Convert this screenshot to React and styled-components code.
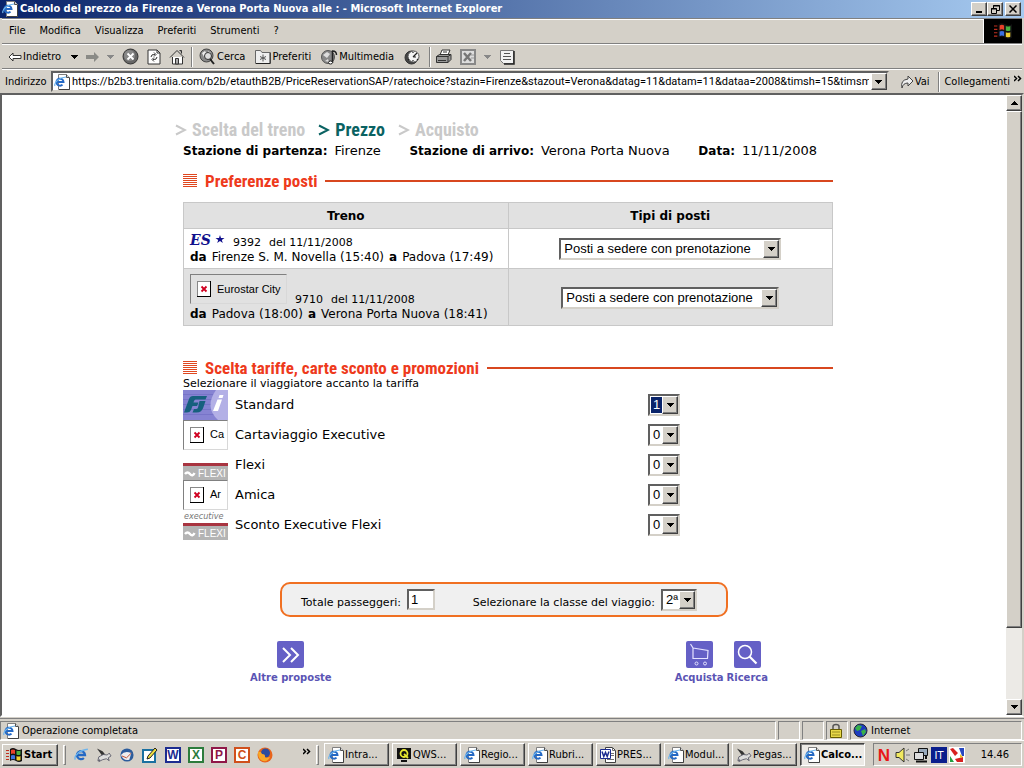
import React, { useState } from 'react'
import styled, { createGlobalStyle, css } from 'styled-components'

const GlobalStyle = createGlobalStyle`
    * {
        box-sizing: border-box;
    }
    body {
        margin: 0;
        background: #d4d0c8;
        color: #000;
        font-family: 'DejaVu Sans Condensed', 'DejaVu Sans', sans-serif;
        font-size: 11px;
        line-height: 14px;
    }
    button, input, select {
        font: inherit;
        color: inherit;
        margin: 0;
        border-radius: 0;
    }
    svg {
        display: block;
        flex: none;
    }
`
const raised = css`
    border: 1px solid;
    border-color: #fff #404040 #404040 #fff;
    box-shadow: inset -1px -1px 0 #808080;
    background: #d4d0c8;
`
const sunken = css`
    border: 2px solid;
    border-color: #606060 #d4d0c8 #d4d0c8 #606060;
    background: #fff;
`
const Window = styled.div`
    display: flex;
    flex-direction: column;
    height: 100vh;
    overflow: hidden;
`

/* Barra del titolo */
const TitleBar = styled.header`
    display: flex;
    align-items: center;
    flex: none;
    height: 18px;
    padding: 0 3px 0 2px;
    gap: 2px;
    background: linear-gradient(to right, #0a246a, #a6caf0);
`
const TitleText = styled.h1`
    flex: 1;
    margin: 0;
    color: #fff;
    font-size: 11px;
    font-weight: bold;
    white-space: nowrap;
`
const CaptionButtons = styled.div`
    display: flex;
`
const CaptionButton = styled.button`
    ${raised}
    display: flex;
    align-items: center;
    justify-content: center;
    width: 16px;
    height: 14px;
    padding: 0;
    margin-left: ${(p) => (p.$detached ? '2px' : '0')};
`

/* Menu e barre degli strumenti */
const MenuBar = styled.nav`
    display: flex;
    align-items: stretch;
    flex: none;
    height: 26px;
    margin: 0 2px;
    border-top: 1px solid #808080;
    border-bottom: 1px solid #808080;
    box-shadow: inset 0 1px 0 #fff;
`
const MenuItem = styled.button`
    border: none;
    background: none;
    padding: 0 7px;
`
const Throbber = styled.div`
    display: flex;
    align-items: center;
    justify-content: center;
    width: 39px;
    margin-left: auto;
    border-left: 1px solid #fff;
    background: #000;
`
const Toolbar = styled.div`
    display: flex;
    align-items: center;
    flex: none;
    height: 25px;
    margin: 0 2px;
    padding-left: 6px;
    border-top: 1px solid #fff;
    border-bottom: 1px solid #808080;
`
const ToolButton = styled.button`
    display: flex;
    align-items: center;
    gap: 1px;
    border: none;
    background: none;
    padding: 0;
    margin-right: ${(p) => p.$after || 8}px;
`
const Separator = styled.span`
    width: 2px;
    height: 20px;
    margin-right: ${(p) => p.$after || 6}px;
    border-left: 1px solid #808080;
    border-right: 1px solid #fff;
`
const AddressBar = styled.form`
    display: flex;
    align-items: center;
    flex: none;
    height: 24px;
    margin: 0 2px;
    padding-left: 3px;
    border-top: 1px solid #fff;
`
const AddressLabel = styled.label`
    width: 46px;
`
const AddressField = styled.div`
    ${sunken}
    display: flex;
    align-items: center;
    flex: 1;
    height: 21px;
    padding-left: 1px;
    gap: 2px;
`
const AddressInput = styled.input`
    flex: 1;
    min-width: 0;
    height: 16px;
    padding: 0;
    border: none;
    outline: none;
    background: none;
    font-family: Roboto, sans-serif;
`
const ArrowBox = styled.span`
    ${raised}
    display: flex;
    align-items: center;
    justify-content: center;
    width: 16px;
    height: 100%;
    pointer-events: none;
`
const GoButton = styled(ToolButton)`
    margin: 0 9px 0 11px;
`
const LinksLabel = styled.span`
    display: flex;
    gap: 4px;
`

/* Area del documento */
const Viewport = styled.div`
    display: flex;
    flex: 1;
    min-height: 0;
    border: 2px solid;
    border-color: #606060 #d4d0c8 #fff #606060;
    background: #fff;
`
const Documento = styled.main`
    flex: 1;
    overflow: hidden;
    font-family: 'DejaVu Sans', sans-serif;
`
const ScrollBar = styled.div`
    display: flex;
    flex-direction: column;
    width: 16px;
    background: #eceae6;
`
const ScrollButton = styled.button`
    ${raised}
    display: flex;
    align-items: center;
    justify-content: center;
    flex: none;
    height: 16px;
    padding: 0;
`
const ScrollTrack = styled.div`
    flex: 1;
    min-height: 0;
`
const ScrollThumb = styled.div`
    ${raised}
    height: 88%;
`
const Column = styled.div`
    max-width: 658px;
    margin: 0 auto;
    padding-top: 22px;
`
const Inset = styled.div`
    padding-left: 8px;
`
const Steps = styled.nav`
    display: flex;
    gap: 13px;
    font-family: 'Liberation Sans Narrow', 'Roboto Condensed', sans-serif;
    font-size: 18px;
    font-weight: bold;
    line-height: 26px;
`
const Step = styled.a`
    display: flex;
    align-items: center;
    gap: 5px;
    color: ${(p) => (p.$current ? '#0a6262' : '#c9c9c9')};
    text-decoration: none;
`
const TripInfo = styled.dl`
    display: flex;
    justify-content: space-between;
    margin: 0;
    padding: 0 16px 0 8px;
    line-height: 16px;
`
const TripItem = styled.div`
    display: flex;
    gap: 7px;

    dt {
        font-size: 12px;
        font-weight: bold;
    }
    dd {
        margin: 0;
        font-size: 13px;
    }
`
const SectionTitle = styled.div`
    display: flex;
    align-items: center;
    gap: 8px;
    height: 20px;
    margin-top: ${(p) => p.$top}px;

    h2 {
        margin: 0;
        color: #ee3a1c;
        font-family: 'Liberation Sans Narrow', 'Roboto Condensed', sans-serif;
        font-size: 17px;
        line-height: 20px;
    }
    &::after {
        content: '';
        flex: 1;
        height: 2px;
        background: #d8471f;
    }
`
const SeatTable = styled.table`
    width: 100%;
    margin-top: 11px;
    border-collapse: collapse;
    table-layout: fixed;
    font-size: 12px;

    th, td {
        border: 1px solid #c8c8c8;
        padding: 5px 6px 4px;
    }
    th {
        height: 26px;
        background: #e1e1e1;
    }
    td:last-child {
        text-align: center;
    }
`
const SeatRow = styled.tr`
    background: ${(p) => (p.$shaded ? '#e1e1e1' : '#fff')};
`
const TrainLine = styled.div`
    display: flex;
    align-items: flex-end;
    gap: 8px;
    font-size: 11px;
`
const TrainLogo = styled.div`
    padding-bottom: ${(p) => (p.$framed ? '3px' : '4px')};
`
const RouteLine = styled.div`
    display: flex;
    gap: 5px;
    white-space: nowrap;
`
const SelectFrame = styled.span`
    ${sunken}
    display: inline-grid;
    grid-template-columns: 1fr 16px;
    width: ${(p) => p.$width}px;
    height: 22px;
    vertical-align: middle;

    select {
        grid-area: 1 / 1 / 2 / 3;
        min-width: 0;
        height: 18px;
        padding: 0 0 0 3px;
        border: none;
        outline: none;
        appearance: none;
        background: none;
        font-family: 'Liberation Sans', sans-serif;
        font-size: 13px;
        line-height: 18px;
        text-align: left;
    }
    ${ArrowBox} {
        grid-area: 1 / 2 / 2 / 3;
    }
`
const SelectHighlight = styled(SelectFrame)`
    select {
        color: #fff;
        background: #0a246a;
        border: 1px solid #fff;
        padding-left: 2px;
        line-height: 16px;
    }
`
const MissingImage = styled.span`
    display: flex;
    align-items: ${(p) => (p.$framed ? 'center' : 'flex-start')};
    gap: 6px;
    width: ${(p) => (p.$framed ? 97 : 45)}px;
    height: 30px;
    padding: ${(p) => (p.$framed ? '0 6px' : '6px 6px 0')};
    overflow: hidden;
    border: 1px solid;
    border-color: #808080 #d8d8d8 #d8d8d8 #808080;
    font-family: 'Liberation Sans', sans-serif;
    font-size: 11px;
    white-space: nowrap;
`
const Hint = styled.p`
    margin: 0;
    font-size: 11px;
    line-height: 12px;
`
const RateRow = styled.div`
    display: grid;
    grid-template-columns: 45px 406px auto;
    align-items: center;
    column-gap: 7px;
    height: 30px;
    justify-items: start;
    font-size: 13px;
`
const SummaryBox = styled.div`
    display: flex;
    align-items: center;
    justify-content: space-between;
    max-width: 448px;
    height: 35px;
    margin: 42px auto 0;
    padding: 0 29px 0 19px;
    border: 2px solid #f07022;
    border-radius: 10px;
    background: #f0f0f0;
    font-size: 11px;
`
const SummaryField = styled.label`
    display: flex;
    align-items: center;
    gap: 6px;
    white-space: nowrap;
`
const SummaryText = styled.span`
    padding-top: 6px;
`
const PassengerInput = styled.input`
    ${sunken}
    width: 28px;
    height: 21px;
    padding: 0 2px;
    font-family: 'Liberation Sans', sans-serif;
    font-size: 13px;
`
const Actions = styled.div`
    display: flex;
    justify-content: space-between;
    padding: 24px 65px 0 75px;
`
const ActionGroup = styled.div`
    display: flex;
    gap: 3px;
`
const ActionButton = styled.button`
    display: flex;
    flex-direction: column;
    align-items: center;
    gap: 3px;
    padding: 0;
    border: none;
    background: none;
    color: #5a54b4;
    font-size: 10px;
    font-weight: bold;
    cursor: pointer;
`

/* Barra di stato */
const StatusBar = styled.footer`
    display: flex;
    flex: none;
    gap: 2px;
    height: 22px;
    margin-top: 1px;
    padding: 2px 2px 0 0;
    border-top: 1px solid #808080;
`
const StatusPane = styled.div`
    display: flex;
    align-items: center;
    flex: ${(p) => (p.$width ? `0 0 ${p.$width}px` : 1)};
    gap: 3px;
    padding-left: 2px;
    border: 1px solid;
    border-color: #808080 #fff #fff #808080;
`

/* Barra delle applicazioni */
const Taskbar = styled.div`
    display: flex;
    align-items: center;
    flex: none;
    height: 28px;
    padding: 0 2px;
    border-top: 1px solid #fff;
`
const StartButton = styled.button`
    ${raised}
    display: flex;
    align-items: center;
    gap: 2px;
    width: 56px;
    height: 22px;
    padding: 0 3px;
    font-weight: bold;
`
const Grip = styled.span`
    width: 3px;
    height: 20px;
    margin: 0 5px;
    border: 1px solid;
    border-color: #fff #808080 #808080 #fff;
`
const QuickLaunch = styled.div`
    display: flex;
    align-items: center;
    gap: 7px;
    width: 240px;
    padding-left: 2px;
`
const QuickMore = styled.span`
    margin: 0 0 6px auto;
`
const TaskList = styled.div`
    display: flex;
    flex: 1;
    gap: 3px;
    min-width: 0;
`
const TaskButton = styled.button`
    ${raised}
    display: flex;
    align-items: center;
    flex: 1;
    gap: 1px;
    min-width: 0;
    height: 23px;
    padding: 0 3px;
    white-space: nowrap;
    ${(p) => p.$active && css`
        border-color: #404040 #fff #fff #404040;
        box-shadow: inset 1px 1px 0 #808080;
        background: #eceae6;
        font-weight: bold;
    `}
`
const Tray = styled.div`
    display: flex;
    align-items: center;
    gap: 2px;
    width: 149px;
    height: 23px;
    margin-left: 8px;
    padding: 0 12px 0 3px;
    border: 1px solid;
    border-color: #808080 #fff #fff #808080;
`
const Clock = styled.time`
    margin-left: auto;
`

const Caret = ({ color = '#000' }) => (
    <svg width="7" height="4" viewBox="0 0 7 4" shapeRendering="crispEdges"><path d="M0 0h7L3.500 4z" fill={color} /></svg>
)
const CaretUp = () => (
    <svg width="7" height="4" viewBox="0 0 7 4" shapeRendering="crispEdges"><path d="M0 4h7L3.500 0z" /></svg>
)
const Chevrons = () => (
    <svg width="8" height="7" viewBox="0 0 8 7" fill="none" stroke="#000" strokeWidth="1.500"><path d="M0 1l2.500 2.500L0 6M4 1l2.500 2.500L4 6" /></svg>
)
const IeLetter = () => (
    <g fill="none">
        <path d="M2.500 8h7a3.500 3.500 0 1 0-1 2.600" stroke="#2468c4" strokeWidth="2" />
        <path d="M1 12C-.500 9 5 3.500 12 3" stroke="#6cb4ee" strokeWidth="1.200" />
    </g>
)
const IePage = () => (
    <svg width="16" height="16" viewBox="0 0 16 16">
        <path d="M4.500.500h8l3 3v12h-11z" fill="#fff" stroke="#808080" />
        <path d="M12.500.500v3h3" fill="#d8d8d8" stroke="#505050" />
        <path d="M15.500 4v11.500H5" fill="none" stroke="#404040" />
        <IeLetter />
    </svg>
)
const IeIcon = () => (
    <svg width="16" height="16" viewBox="-1 1 14 14"><IeLetter /></svg>
)
const WindowsFlag = ({ size = 16 }) => (
    <svg width={size} height={size} viewBox="0 0 16 16">
        <path d="M0 3h3v1H0zM0 6h3v1H0zM0 9h3v1H0zM0 12h3v1H0z" fill="#c03020" />
        <path d="M4 2q3-2 6 0t6 0v12q-3 2-6 0t-6 0z" fill="#111" />
        <path d="M5 3q2-1 4 0v4q-2-1-4 0z" fill="#e8402a" />
        <path d="M10.500 3.500q2 1 4 0v4q-2 1-4 0z" fill="#48b040" />
        <path d="M5 8.500q2-1 4 0v4q-2-1-4 0z" fill="#3a70e0" />
        <path d="M10.500 9q2 1 4 0v4q-2 1-4 0z" fill="#f0d030" />
    </svg>
)
const BackIcon = () => (
    <svg width="14" height="10" viewBox="0 0 14 10"><path d="M1 5l4-4v2.500h8v3H5V9z" fill="#fff" stroke="#333" /></svg>
)
const ForwardIcon = () => (
    <svg width="13" height="10" viewBox="0 0 13 10"><path d="M13 5L8 0v3H0v4h8v3z" fill="#8a8a86" /></svg>
)
const StopIcon = () => (
    <svg width="17" height="17" viewBox="0 0 17 17"><circle cx="8.500" cy="8.500" r="7.500" fill="#666" stroke="#333" /><circle cx="7.500" cy="7.500" r="5.500" fill="#888" /><path d="M5.500 5.500l6 6m0-6l-6 6" stroke="#fff" strokeWidth="1.800" /></svg>
)
const RefreshIcon = () => (
    <svg width="14" height="16" viewBox="0 0 14 16" fill="none" stroke="#333"><path d="M1 1h9l3 3v11H1z" fill="#fff" /><path d="M10 1v3h3" /><path d="M4 8q0-3 4-2.500M7 3.500l2 2-2 2M10 8q0 3-4 2.500M7 8.500l-2 2 2 2" /></svg>
)
const HomeIcon = () => (
    <svg width="16" height="16" viewBox="0 0 16 16" stroke="#333"><path d="M3.500 8v7h10V8" fill="#fff" /><path d="M1 8.500l7-7 7 7" fill="none" /><path d="M10.500 1.500h2v3" fill="#888" /><path d="M6.500 9.500h3V15h-3z" fill="#aaa" /></svg>
)
const SearchIcon = () => (
    <svg width="17" height="17" viewBox="0 0 17 17"><circle cx="7.500" cy="7.500" r="6.500" fill="#888" stroke="#444" /><path d="M3 5l3-2 2 3-3 3zM9 3l3 2-1 3z" fill="#eee" /><circle cx="9" cy="8" r="3.500" fill="#ddd" stroke="#333" /><path d="M11 11l4 5" stroke="#222" strokeWidth="2" /></svg>
)
const FavoritesIcon = () => (
    <svg width="16" height="15" viewBox="0 0 16 15"><path d="M.500 1.500h5l1.500 2h8.500v11H.500z" fill="#eee" stroke="#666" /><path d="M15 4v10.500H1" stroke="#222" fill="none" /><path d="M8 5.500v7M5 7.500l6 3M11 7.500l-6 3" stroke="#555" /></svg>
)
const MediaIcon = () => (
    <svg width="17" height="16" viewBox="0 0 17 16"><circle cx="7" cy="8" r="6.500" fill="#888" stroke="#555" /><path d="M2 6l4-3 3 2-3 4zM4 12l3-2 1 3z" fill="#ddd" /><path d="M11.500 14V2q4 0 4 4" fill="none" stroke="#222" strokeWidth="1.500" /><ellipse cx="9.500" cy="13.500" rx="2" ry="1.500" fill="#fff" stroke="#222" /></svg>
)
const HistoryIcon = () => (
    <svg width="17" height="16" viewBox="0 0 17 16"><circle cx="7.500" cy="8.500" r="6.500" fill="#444" stroke="#333" /><circle cx="9.500" cy="7.500" r="5.500" fill="#f4f4f4" stroke="#555" /><path d="M9 8l4-4M9 8h3M9 3v1M13 10l1 1M5 10l-1 1M9 11v1" stroke="#222" strokeWidth="1.200" /></svg>
)
const PrintIcon = () => (
    <svg width="17" height="16" viewBox="0 0 17 16" stroke="#333"><path d="M5 6l2-5h8l-2 5" fill="#fff" /><path d="M1.500 7.500l3-2H16v5l-3 3H1.500z" fill="#999" /><path d="M1.500 7.500H13v6M13 7.500l3-2M3 11.500h8M8 3h4" fill="none" /></svg>
)
const EditIcon = () => (
    <svg width="16" height="16" viewBox="0 0 16 16"><path d="M1 1h14v14H1z" fill="#ddd" stroke="#888" strokeWidth="2" /><path d="M4 4l7 8M11 4l-7 8" stroke="#777" strokeWidth="2.500" /><path d="M11 6h3M11 9h3" stroke="#999" /></svg>
)
const DiscussIcon = () => (
    <svg width="16" height="16" viewBox="0 0 16 16"><path d="M1.500 1.500h13v13h-10l-3-3z" fill="#f2f2f2" stroke="#777" /><path d="M15 2v13H5" fill="none" stroke="#222" strokeWidth="1.500" /><path d="M5 4.500h6M4 7.500h8M4 10.500h8" stroke="#555" /></svg>
)
const GoIcon = () => (
    <svg width="14" height="14" viewBox="0 0 14 14"><path d="M2 13Q0 5 8 4V1l5 5-5 5V8Q3 8 2 13z" fill="#eee" stroke="#444" /></svg>
)
const BarsIcon = () => (
    <svg width="14" height="14" viewBox="0 0 14 14" shapeRendering="crispEdges"><path d="M0 0h14v1H0zM0 2h14v1H0zM0 4h14v1H0zM0 6h14v1H0zM0 8h14v1H0zM0 10h14v1H0zM0 12h14v1H0z" fill="#e04820" /></svg>
)
const StepArrow = () => (
    <svg width="12" height="12" viewBox="0 0 12 12" fill="none" stroke="currentColor" strokeWidth="2"><path d="M1 1.500l9 4.500-9 4.500" /></svg>
)
const RedCross = () => (
    <svg width="14" height="16" viewBox="0 0 14 16"><path d="M0 0h14v16H0z" fill="#000" /><path d="M0 0h13v15H0z" fill="#888" /><path d="M1 1h12v14H1z" fill="#fff" /><path d="M4.500 5.500l5 5M9.500 5.500l-5 5" stroke="#d00020" strokeWidth="1.800" /></svg>
)
const EsLogo = () => (
    <svg width="35" height="12" viewBox="0 0 35 12" overflow="visible">
        <text x="0" y="11" fontFamily="DejaVu Serif, serif" fontSize="14" fontWeight="bold" fontStyle="italic" fill="#10108c">ES</text>
        <path d="M30 1l1 3h3.500l-2.700 2 1 3-2.800-1.900-2.800 1.900 1-3-2.700-2H29z" fill="#10108c" />
    </svg>
)
const FsLogo = () => (
    <svg width="45" height="30" viewBox="0 0 45 30">
        <path d="M0 0h45v30H0z" fill="#8683d2" />
        <path d="M0 4.500h45M0 9.500h45M0 14.500h45M0 19.500h45M0 24.500h45" stroke="#7774c8" />
        <path d="M33 0h12v30H35Q21 17 33 0z" fill="#b3b0e6" />
        <path d="M10 6h14l-1.500 3.500H12.500q-1 0-1.500 1.500l-.500 1.500h5L14 16H9.500L8 20q-1 2.500-4 2.500H1L4.500 13 6 9q1-3 4-3z" fill="#17607e" />
        <path d="M16.500 11h6l-2 6q-1.500 5.500-7 5.500H9.500L11 19h2q1.500 0 2-1.500z" fill="#17607e" />
        <path d="M36.500 5h4l-1 3h-4zM34.500 9.500h4.500L35 21h-5z" fill="#fff" />
    </svg>
)
const FlexiBadge = ({ executive }) => (
    <svg width="45" height="30" viewBox="0 0 45 30">
        {executive && <text x="1" y="9" fontFamily="DejaVu Sans Condensed, sans-serif" fontSize="9" fontStyle="italic" fill="#777">executive</text>}
        <path d="M0 13h45v17H0z" fill="#b4b4b4" />
        <path d="M0 13h45v3H0z" fill="#a83440" />
        <path d="M2 24q2.500-3 5 0t4.500-1" fill="none" stroke="#fff" strokeWidth="2.500" />
        <text x="15" y="27" fontFamily="Liberation Sans, sans-serif" fontSize="10" fill="#fff">FLEXI</text>
    </svg>
)
const NextIcon = () => (
    <svg width="27" height="27" viewBox="0 0 27 27"><rect width="27" height="27" rx="2" fill="#6560c6" /><path d="M6 7l7 7-7 7M14 7l7 7-7 7" fill="none" stroke="#fff" strokeWidth="2" /></svg>
)
const CartIcon = () => (
    <svg width="27" height="27" viewBox="0 0 27 27" fill="none" stroke="#e4e2ff"><rect width="27" height="27" rx="2" fill="#6560c6" stroke="none" /><path d="M4.500 3l2.500 4v10.500h14.500l.500-8L7 7" strokeWidth="1.200" /><circle cx="10.500" cy="22.500" r="1.500" /><circle cx="19" cy="22.500" r="1.500" /></svg>
)
const LensIcon = () => (
    <svg width="27" height="27" viewBox="0 0 27 27" fill="none" stroke="#fff"><rect width="27" height="27" rx="2" fill="#6560c6" stroke="none" /><circle cx="11" cy="11" r="6.500" strokeWidth="1.500" /><path d="M15.500 15.500l7 7" strokeWidth="2.200" /></svg>
)
const LockIcon = () => (
    <svg width="14" height="15" viewBox="0 0 14 15"><path d="M4 7V3.500q0-2 3-2t3 2V7" fill="none" stroke="#555" strokeWidth="1.500" /><path d="M1.500 6.500h11v8h-11z" fill="#e8d848" stroke="#665c00" /><path d="M3 9h8M3 12h8" stroke="#998c20" /></svg>
)
const GlobeIcon = () => (
    <svg width="15" height="15" viewBox="0 0 15 15"><circle cx="7.500" cy="7.500" r="6.500" fill="#1c3cc0" stroke="#223" /><path d="M2 5l3-3 4 1-2 4-3 1zM8 8l4-2 1 3-3 4z" fill="#38b048" /></svg>
)
const PegasusIcon = () => (
    <svg width="16" height="16" viewBox="0 0 17 16"><path d="M1 1l6 3 4 5-5-1z" fill="#333" /><path d="M3 10q5-4 9-2l2-2 2 3-3 2 1 3-3-2-4 1-4 2 1-2-2 1z" fill="#ddd" stroke="#445" strokeWidth=".8" /></svg>
)
const BirdIcon = () => (
    <svg width="16" height="16" viewBox="0 0 17 16"><circle cx="8.500" cy="8" r="7" fill="#2c5c9c" /><path d="M2 8q4-5 11-2l-2 7q-6 2-9-5z" fill="#eee" /><path d="M3 9l5 2 5-5" stroke="#c04828" fill="none" /></svg>
)
const NotesIcon = () => (
    <svg width="16" height="16" viewBox="0 0 16 16"><path d="M1 3h12v12H1z" fill="#fff" stroke="#1a70a0" strokeWidth="2" /><path d="M5 12l1-3 7-8 2 2-7 8z" fill="#f0e040" stroke="#222" /></svg>
)
const AppIcon = ({ color, letter }) => (
    <svg width="16" height="16" viewBox="0 0 16 16">
        <path d="M1 1h14v14H1z" fill="#fff" stroke={color} strokeWidth="2" />
        <text x="8" y="12" textAnchor="middle" fontFamily="Liberation Sans, sans-serif" fontSize="12" fontWeight="bold" fill={color}>{letter}</text>
    </svg>
)
const WordPage = () => (
    <svg width="16" height="16" viewBox="0 0 16 16">
        <path d="M5.500.500h7l3 3v12h-10z" fill="#fff" stroke="#404040" />
        <path d="M12.500.500v3h3M11 6.500h3M11 8.500h3M7 12.500h7" fill="none" stroke="#707070" />
        <path d="M.500 2.500h10v9H.500z" fill="#fff" stroke="#1c2c90" />
        <path d="M2 4.500l1.800 5 1.700-4 1.700 4L9 4.500" fill="none" stroke="#1c2c90" strokeWidth="1.500" />
    </svg>
)
const FirefoxIcon = () => (
    <svg width="16" height="16" viewBox="0 0 16 16"><circle cx="8" cy="8" r="7.500" fill="#e8641c" /><circle cx="8.500" cy="6" r="4.500" fill="#2c4c9c" /><path d="M1 5q3-1 4 2 3 0 3 2-1 3 5 1-2 5-7 4T1 5z" fill="#f8a828" /></svg>
)
const QwsIcon = () => (
    <svg width="16" height="16" viewBox="0 0 16 16"><path d="M1 1h14v11H1z" fill="#111" /><circle cx="8" cy="6.500" r="3.500" fill="none" stroke="#e8e830" strokeWidth="1.800" /><path d="M8 7l4 4" stroke="#e8e830" strokeWidth="1.800" /><path d="M5 14h6" stroke="#111" strokeWidth="2" /></svg>
)
const SpeakerIcon = () => (
    <svg width="17" height="16" viewBox="0 0 17 16"><path d="M2 5.500h3l5-4.500v14l-5-4.500H2z" fill="#f0e860" stroke="#333" /><path d="M12 4l3-2M12 8h4M12 12l3 2" stroke="#777" /></svg>
)
const NetworkIcon = () => (
    <svg width="16" height="16" viewBox="0 0 16 16" stroke="#111"><path d="M5.500 1.500h9v7h-9z" fill="#9ab" /><path d="M1.500 5.500h9v7h-9z" fill="#ddd" /><path d="M3 14.500h11M13 9v3" strokeWidth="2" /></svg>
)
const LanguageIcon = () => (
    <svg width="16" height="16" viewBox="0 0 16 16"><path d="M0 0h16v16H0z" fill="#0a1e8c" /><text x="8" y="12" textAnchor="middle" fontFamily="DejaVu Sans Condensed, sans-serif" fontSize="11" fill="#fff">IT</text></svg>
)
const ShieldIcon = () => (
    <svg width="16" height="16" viewBox="0 0 16 16"><path d="M0 0h16v16H0z" fill="#fff" /><path d="M1 2l3-1 5 5-3 3zM14 10v5H8l-2-3z" fill="#d82020" /><path d="M10 1h5v8h-2z" fill="#2848c0" /><path d="M1 9l4 6H1z" fill="#20a040" /><path d="M11 7l3 3-3 1z" fill="#f0c020" /></svg>
)
const NIcon = () => (
    <svg width="15" height="16" viewBox="0 0 15 16"><text x="7" y="14" textAnchor="middle" fontFamily="Liberation Sans, sans-serif" fontSize="17" fontWeight="bold" fill="#e81818">N</text></svg>
)

const menus = ['File', 'Modifica', 'Visualizza', 'Preferiti', 'Strumenti', '?']

const treni = [
    { numero: '9392', data: '11/11/2008', da: 'Firenze S. M. Novella (15:40)', a: 'Padova (17:49)', larghezza: 222 },
    { numero: '9710', data: '11/11/2008', da: 'Padova (18:00)', a: 'Verona Porta Nuova (18:41)', categoria: 'Eurostar City', larghezza: 218 },
]

const tariffe = [
    { id: 'standard', nome: 'Standard', logo: <FsLogo /> },
    { id: 'cartaviaggio', nome: 'Cartaviaggio Executive', mancante: 'Ca' },
    { id: 'flexi', nome: 'Flexi', logo: <FlexiBadge /> },
    { id: 'amica', nome: 'Amica', mancante: 'Ar' },
    { id: 'sconto', nome: 'Sconto Executive Flexi', logo: <FlexiBadge executive /> },
]

const quickIcons = [
    <IeIcon />, <PegasusIcon />, <BirdIcon />, <NotesIcon />,
    <AppIcon color="#1c2c90" letter="W" />, <AppIcon color="#2c7c3c" letter="X" />,
    <AppIcon color="#901848" letter="P" />, <AppIcon color="#d0501c" letter="C" />, <FirefoxIcon />,
]

const tasks = [
    { nome: 'Intra...', icona: <IePage /> },
    { nome: 'QWS...', icona: <QwsIcon /> },
    { nome: 'Regio...', icona: <IePage /> },
    { nome: 'Rubri...', icona: <IePage /> },
    { nome: 'PRES...', icona: <WordPage /> },
    { nome: 'Modul...', icona: <IePage /> },
    { nome: 'Pegas...', icona: <PegasusIcon /> },
    { nome: 'Calco...', icona: <IePage />, attivo: true },
]

const Tendina = ({ id, label, width, options, value, onChange, highlight }) => {
    const Frame = highlight ? SelectHighlight : SelectFrame
    return (
        <Frame $width={width}>
            <select id={id} aria-label={label} value={value} onChange={onChange}>
                {options.map((o) => <option key={o}>{o}</option>)}
            </select>
            <ArrowBox><Caret /></ArrowBox>
        </Frame>
    )
}

const App = () => {
    const [url, setUrl] = useState('https://b2b3.trenitalia.com/b2b/etauthB2B/PriceReservationSAP/ratechoice?stazin=Firenze&stazout=Verona&datag=11&datam=11&dataa=2008&timsh=15&timsm=00')
    const [posti, setPosti] = useState({})
    const [viaggiatori, setViaggiatori] = useState({ standard: '1' })
    const [classe, setClasse] = useState('2ª')
    const [totale, setTotale] = useState('1')

    return (
        <Window>
            <GlobalStyle />
            <TitleBar>
                <IePage />
                <TitleText>Calcolo del prezzo da Firenze a Verona Porta Nuova alle : - Microsoft Internet Explorer</TitleText>
                <CaptionButtons>
                    <CaptionButton aria-label="Riduci a icona"><svg width="8" height="8" viewBox="0 0 8 8"><path d="M1 6h6v2H1z" /></svg></CaptionButton>
                    <CaptionButton aria-label="Ripristina"><svg width="9" height="9" viewBox="0 0 9 9" fill="none" stroke="#000"><path d="M2.500 3V.500h6v5H6M2 1h7M.500 3.500h5v5h-5zM0 4h6" /></svg></CaptionButton>
                    <CaptionButton aria-label="Chiudi" $detached><svg width="8" height="8" viewBox="0 0 8 8"><path d="M.500.500l7 7M7.500.500l-7 7" stroke="#000" strokeWidth="1.500" /></svg></CaptionButton>
                </CaptionButtons>
            </TitleBar>
            <MenuBar>
                {menus.map((m) => <MenuItem key={m}>{m}</MenuItem>)}
                <Throbber><WindowsFlag size={18} /></Throbber>
            </MenuBar>
            <Toolbar>
                <ToolButton $after={10}><BackIcon />Indietro</ToolButton>
                <ToolButton aria-label="Cronologia indietro"><Caret /></ToolButton>
                <ToolButton aria-label="Avanti"><ForwardIcon /></ToolButton>
                <ToolButton aria-label="Cronologia avanti"><Caret color="#888" /></ToolButton>
                <ToolButton aria-label="Termina"><StopIcon /></ToolButton>
                <ToolButton aria-label="Aggiorna"><RefreshIcon /></ToolButton>
                <ToolButton aria-label="Pagina iniziale" $after={6}><HomeIcon /></ToolButton>
                <Separator />
                <ToolButton $after={10}><SearchIcon />Cerca</ToolButton>
                <ToolButton $after={10}><FavoritesIcon />Preferiti</ToolButton>
                <ToolButton $after={10}><MediaIcon />Multimedia</ToolButton>
                <ToolButton aria-label="Cronologia"><HistoryIcon /></ToolButton>
                <Separator $after={4} />
                <ToolButton aria-label="Stampa"><PrintIcon /></ToolButton>
                <ToolButton aria-label="Modifica"><EditIcon /></ToolButton>
                <ToolButton aria-label="Altri editor"><Caret color="#888" /></ToolButton>
                <ToolButton aria-label="Discuti"><DiscussIcon /></ToolButton>
            </Toolbar>
            <AddressBar onSubmit={(e) => e.preventDefault()}>
                <AddressLabel htmlFor="indirizzo">Indirizzo</AddressLabel>
                <AddressField>
                    <IePage />
                    <AddressInput id="indirizzo" value={url} onChange={(e) => setUrl(e.target.value)} />
                    <ArrowBox><Caret /></ArrowBox>
                </AddressField>
                <GoButton><GoIcon />Vai</GoButton>
                <Separator $after={4} />
                <LinksLabel>Collegamenti <Chevrons /></LinksLabel>
            </AddressBar>

            <Viewport>
                <Documento>
                    <Column>
                        <Steps>
                            <Step href="#treno"><StepArrow />Scelta del treno</Step>
                            <Step href="#prezzo" $current><StepArrow />Prezzo</Step>
                            <Step href="#acquisto"><StepArrow />Acquisto</Step>
                        </Steps>
                        <TripInfo>
                            <TripItem><dt>Stazione di partenza:</dt><dd>Firenze</dd></TripItem>
                            <TripItem><dt>Stazione di arrivo:</dt><dd>Verona Porta Nuova</dd></TripItem>
                            <TripItem><dt>Data:</dt><dd>11/11/2008</dd></TripItem>
                        </TripInfo>

                        <Inset>
                            <SectionTitle $top={12}><BarsIcon /><h2>Preferenze posti</h2></SectionTitle>
                            <SeatTable>
                                <thead>
                                    <tr><th>Treno</th><th>Tipi di posti</th></tr>
                                </thead>
                                <tbody>
                                    {treni.map((t) => (
                                        <SeatRow key={t.numero} $shaded={Boolean(t.categoria)}>
                                            <td>
                                                <TrainLine>
                                                    <TrainLogo $framed={Boolean(t.categoria)}>
                                                        {t.categoria
                                                            ? <MissingImage $framed><RedCross />{t.categoria}</MissingImage>
                                                            : <EsLogo />}
                                                    </TrainLogo>
                                                    <span>{t.numero}</span>
                                                    <span>del {t.data}</span>
                                                </TrainLine>
                                                <RouteLine>
                                                    <b>da</b> <span>{t.da}</span> <b>a</b> <span>{t.a}</span>
                                                </RouteLine>
                                            </td>
                                            <td>
                                                <Tendina
                                                    label={`Tipo di posto treno ${t.numero}`}
                                                    width={t.larghezza}
                                                    options={['Posti a sedere con prenotazione']}
                                                    value={posti[t.numero]}
                                                    onChange={(e) => setPosti({ ...posti, [t.numero]: e.target.value })}
                                                />
                                            </td>
                                        </SeatRow>
                                    ))}
                                </tbody>
                            </SeatTable>

                            <SectionTitle $top={32}><BarsIcon /><h2>Scelta tariffe, carte sconto e promozioni</h2></SectionTitle>
                            <Hint>Selezionare il viaggiatore accanto la tariffa</Hint>
                            {tariffe.map((t) => (
                                <RateRow key={t.id}>
                                    {t.logo || <MissingImage><RedCross />{t.mancante}</MissingImage>}
                                    <label htmlFor={t.id}>{t.nome}</label>
                                    <Tendina
                                        id={t.id}
                                        width={32}
                                        highlight={t.id === 'standard'}
                                        options={['0', '1', '2', '3', '4', '5']}
                                        value={viaggiatori[t.id] || '0'}
                                        onChange={(e) => setViaggiatori({ ...viaggiatori, [t.id]: e.target.value })}
                                    />
                                </RateRow>
                            ))}
                        </Inset>

                        <SummaryBox>
                            <SummaryField>
                                <SummaryText>Totale passeggeri:</SummaryText>
                                <PassengerInput value={totale} onChange={(e) => setTotale(e.target.value)} />
                            </SummaryField>
                            <SummaryField>
                                <SummaryText>Selezionare la classe del viaggio:</SummaryText>
                                <Tendina width={36} options={['1ª', '2ª']} value={classe} onChange={(e) => setClasse(e.target.value)} />
                            </SummaryField>
                        </SummaryBox>

                        <Actions>
                            <ActionButton><NextIcon />Altre proposte</ActionButton>
                            <ActionGroup>
                                <ActionButton><CartIcon />Acquista</ActionButton>
                                <ActionButton><LensIcon />Ricerca</ActionButton>
                            </ActionGroup>
                        </Actions>
                    </Column>
                </Documento>
                <ScrollBar>
                    <ScrollButton aria-label="Scorri su"><CaretUp /></ScrollButton>
                    <ScrollTrack><ScrollThumb /></ScrollTrack>
                    <ScrollButton aria-label="Scorri giù"><Caret /></ScrollButton>
                </ScrollBar>
            </Viewport>

            <StatusBar>
                <StatusPane><IePage />Operazione completata</StatusPane>
                <StatusPane $width={22} />
                <StatusPane $width={22} />
                <StatusPane $width={22}><LockIcon /></StatusPane>
                <StatusPane $width={172}><GlobeIcon />Internet</StatusPane>
            </StatusBar>
            <Taskbar>
                <StartButton><WindowsFlag />Start</StartButton>
                <Grip />
                <QuickLaunch>
                    {quickIcons.map((icona, i) => <React.Fragment key={i}>{icona}</React.Fragment>)}
                    <QuickMore><Chevrons /></QuickMore>
                </QuickLaunch>
                <Grip />
                <TaskList>
                    {tasks.map((t) => <TaskButton key={t.nome} $active={t.attivo}>{t.icona}{t.nome}</TaskButton>)}
                </TaskList>
                <Tray>
                    <NIcon /><SpeakerIcon /><NetworkIcon /><LanguageIcon /><ShieldIcon />
                    <Clock>14.46</Clock>
                </Tray>
            </Taskbar>
        </Window>
    )
}

export default App
